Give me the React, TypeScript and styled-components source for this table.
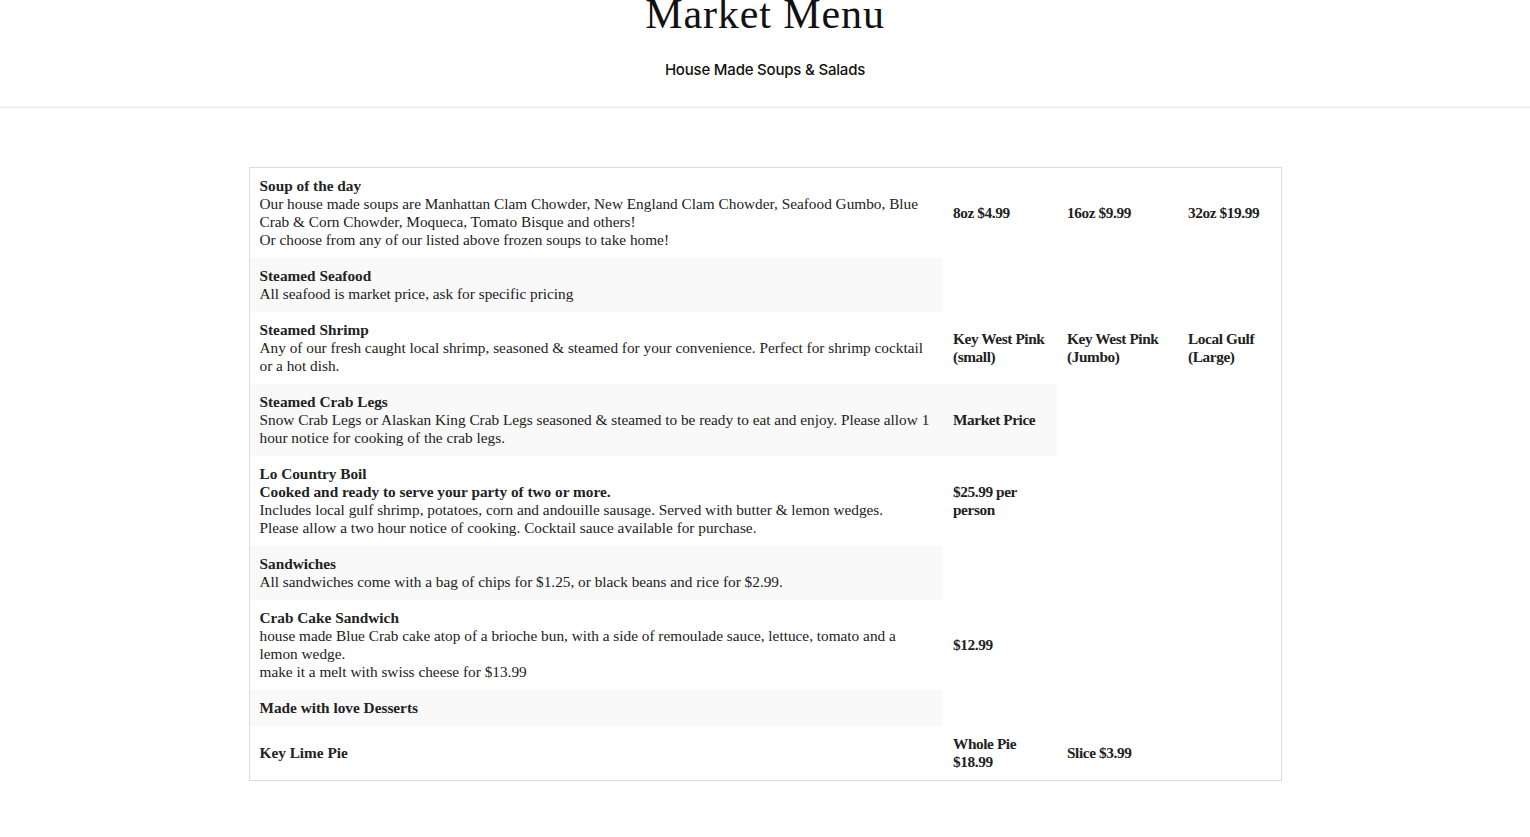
import React from "react";
import styled, { createGlobalStyle } from "styled-components";

const Global = createGlobalStyle`
  html, body { margin: 0; padding: 0; background: #fff; }
  body { font-family: "Liberation Serif", serif; color: #222; }
`;

const Page = styled.div`
  overflow: hidden;
`;

const Header = styled.header`
  display: flex;
  flex-direction: column;
  align-items: center;
  border-bottom: 1px solid #e6e6e6;
  height: 108px;
  box-sizing: border-box;
`;

const Title = styled.h1`
  margin: -7px 0 0 0;
  font-family: "Liberation Serif", serif;
  font-weight: 400;
  font-size: 42px;
  line-height: 42px;
  letter-spacing: 0.9px;
  color: #111;
`;

const Subtitle = styled.h2`
  margin: 26px 0 0 0;
  font-family: Inter, "Liberation Sans", sans-serif;
  font-weight: 500;
  font-size: 15px;
  line-height: 18px;
  letter-spacing: -0.2px;
  color: #111;
`;

const Main = styled.main`
  display: flex;
  justify-content: center;
  padding-top: 59px;
  padding-bottom: 40px;
`;

const Table = styled.table`
  width: 1032px;
  border-collapse: collapse;
  table-layout: fixed;
  border: 1px solid #dcdcdc;
  font-size: 15.3px;
  line-height: 18px;

  tbody tr:nth-child(even) td {
    background: #f9f9f9;
  }
`;

const Cell = styled.td`
  padding: 9px 10px;
  vertical-align: middle;
  color: #222;
`;

const Price = styled(Cell)`
  font-weight: 700;
  letter-spacing: -0.4px;
`;

const Name = styled.strong`
  display: block;
  font-weight: 700;
`;

const Line = styled.span<{ $bold?: boolean }>`
  display: block;
  font-weight: ${(p) => (p.$bold ? 700 : 400)};
`;

type Row = { name: string; lines?: { text: string; bold?: boolean }[]; prices: string[] };

const rows: Row[] = [
  {
    name: "Soup of the day",
    lines: [
      {
        text:
          "Our house made soups are Manhattan Clam Chowder, New England Clam Chowder, Seafood Gumbo, Blue Crab & Corn Chowder, Moqueca, Tomato Bisque and others!",
      },
      { text: "Or choose from any of our listed above frozen soups to take home!" },
    ],
    prices: ["8oz $4.99", "16oz $9.99", "32oz $19.99"],
  },
  {
    name: "Steamed Seafood",
    lines: [{ text: "All seafood is market price, ask for specific pricing" }],
    prices: [],
  },
  {
    name: "Steamed Shrimp",
    lines: [
      {
        text:
          "Any of our fresh caught local shrimp, seasoned & steamed for your convenience. Perfect for shrimp cocktail or a hot dish.",
      },
    ],
    prices: ["Key West Pink (small)", "Key West Pink (Jumbo)", "Local Gulf (Large)"],
  },
  {
    name: "Steamed Crab Legs",
    lines: [
      {
        text:
          "Snow Crab Legs or Alaskan King Crab Legs seasoned & steamed to be ready to eat and enjoy. Please allow 1 hour notice for cooking of the crab legs.",
      },
    ],
    prices: ["Market Price"],
  },
  {
    name: "Lo Country Boil",
    lines: [
      { text: "Cooked and ready to serve your party of two or more.", bold: true },
      { text: "Includes local gulf shrimp, potatoes, corn and andouille sausage. Served with butter & lemon wedges." },
      { text: "Please allow a two hour notice of cooking. Cocktail sauce available for purchase." },
    ],
    prices: ["$25.99 per person"],
  },
  {
    name: "Sandwiches",
    lines: [{ text: "All sandwiches come with a bag of chips for $1.25, or black beans and rice for $2.99." }],
    prices: [],
  },
  {
    name: "Crab Cake Sandwich",
    lines: [
      {
        text:
          "house made Blue Crab cake atop of a brioche bun, with a side of remoulade sauce, lettuce, tomato and a lemon wedge.",
      },
      { text: "make it a melt with swiss cheese for $13.99" },
    ],
    prices: ["$12.99"],
  },
  { name: "Made with love Desserts", prices: [] },
  { name: "Key Lime Pie", prices: ["Whole Pie $18.99", "Slice $3.99"] },
];

export default function App() {
  return (
    <Page>
      <Global />
      <Header>
        <Title>Market Menu</Title>
        <Subtitle>House Made Soups &amp; Salads</Subtitle>
      </Header>
      <Main>
        <Table>
          <colgroup>
            <col style={{ width: 694 }} />
            <col style={{ width: 114 }} />
            <col style={{ width: 121 }} />
            <col style={{ width: 103 }} />
          </colgroup>
          <tbody>
            {rows.map((r) => (
              <tr key={r.name}>
                <Cell>
                  <Name>{r.name}</Name>
                  {r.lines?.map((l, i) => (
                    <Line key={i} $bold={l.bold}>
                      {l.text}
                    </Line>
                  ))}
                </Cell>
                {r.prices.map((p) => (
                  <Price key={p}>{p}</Price>
                ))}
              </tr>
            ))}
          </tbody>
        </Table>
      </Main>
    </Page>
  );
}
